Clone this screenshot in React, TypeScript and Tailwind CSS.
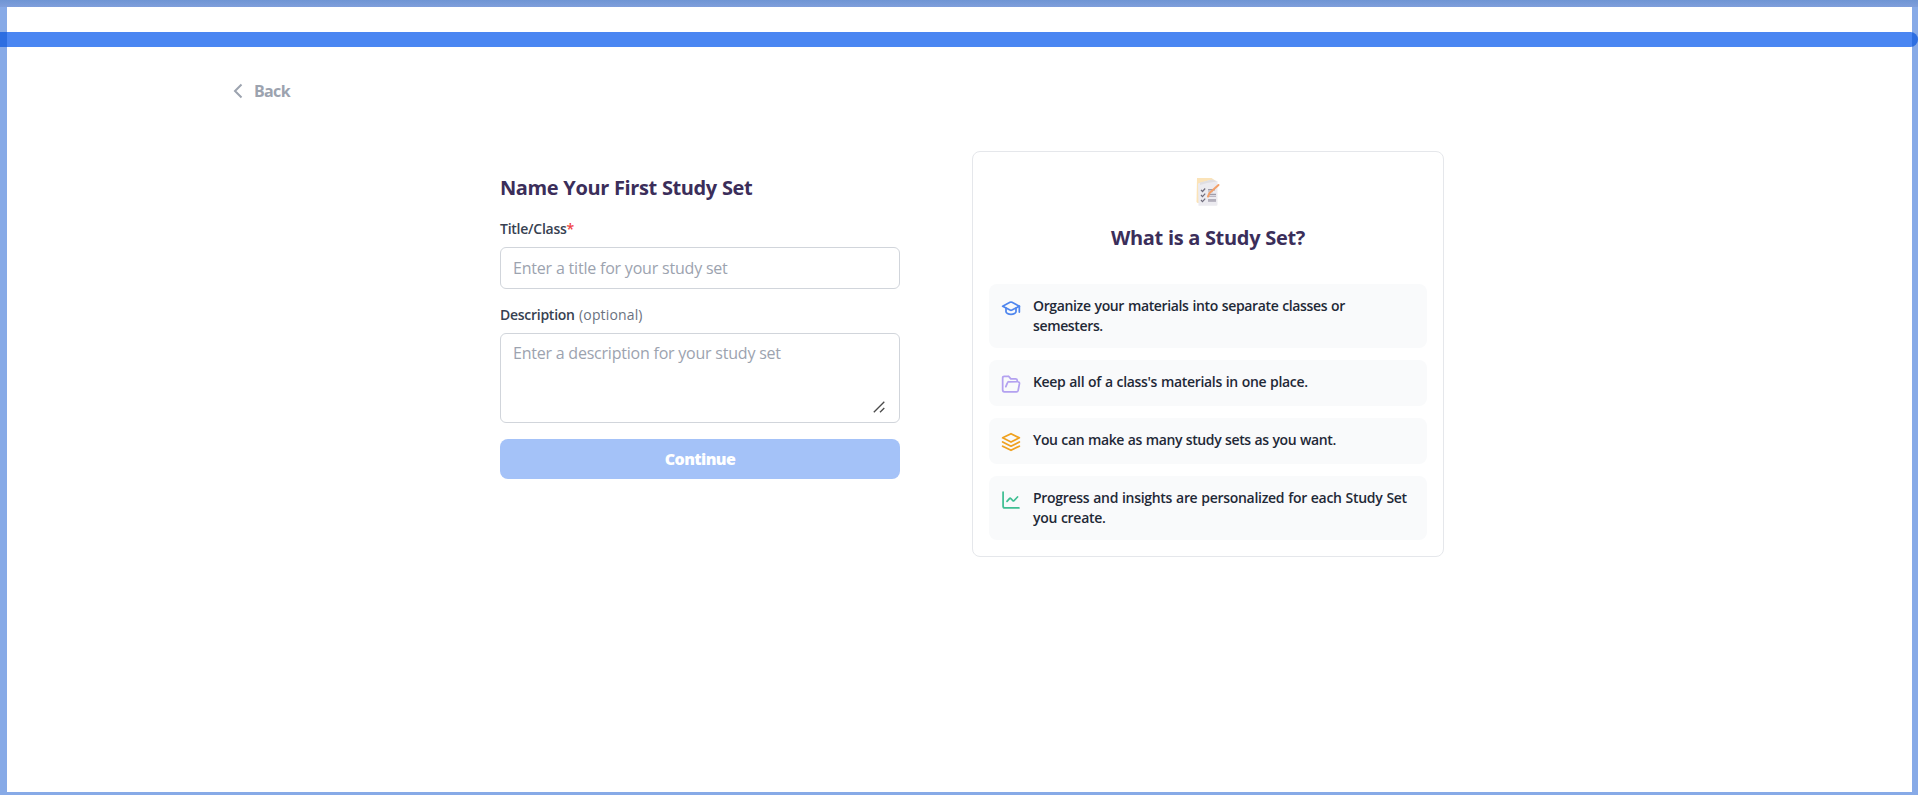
import type { ReactNode } from "react";

const stroke = {
  viewBox: "0 0 24 24",
  fill: "none",
  stroke: "currentColor",
  strokeWidth: 2.1,
  strokeLinecap: "round" as const,
  strokeLinejoin: "round" as const,
};

function CapIcon() {
  return (
    <svg {...stroke} className="size-5 text-[#4f86ee]">
      <path d="M2 9.8 10.8 5.2a2.6 2.6 0 0 1 2.4 0L22 9.8l-8.8 4.6a2.6 2.6 0 0 1-2.4 0L2 9.8Z" />
      <path d="M6 12.2v4.3c0 1.4 2.7 3.2 6 3.2s6-1.8 6-3.2v-4.3" />
      <path d="M22 9.8v7" />
    </svg>
  );
}

function FolderIcon() {
  return (
    <svg {...stroke} className="size-5 text-[#b3a1f0]">
      <path d="M19.5 9V7.8a2 2 0 0 0-2-2h-5.7L9.5 3.2A1.6 1.6 0 0 0 8.3 2.7H3.8A1.8 1.8 0 0 0 2 4.5V19.3a2 2 0 0 0 2 2h14.6a2 2 0 0 0 1.95-1.5l1.6-8.2A2 2 0 0 0 20.2 9.3H9.6a2 2 0 0 0-1.9 1.3L5.8 15.2" />
    </svg>
  );
}

function LayersIcon() {
  return (
    <svg {...stroke} className="size-5 text-[#efa11f]">
      <path d="M2 7 12 2l10 5-10 5L2 7Z" />
      <path d="m2 12 10 5 10-5" />
      <path d="m2 17 10 5 10-5" />
    </svg>
  );
}

function ChartIcon() {
  return (
    <svg {...stroke} className="size-5 text-[#3fbf93]">
      <path d="M2.5 2.5V19.5a2 2 0 0 0 2 2H21.5" />
      <path d="m7.2 13.6 3.2-3.6a.8.8 0 0 1 1.2 0l2.7 2.9a.8.8 0 0 0 1.2 0l4.3-4.5" />
    </svg>
  );
}

function ChecklistArt() {
  return (
    <svg viewBox="0 0 24 28" className="h-7 w-6">
      <path d="M1 0h14.5l4.5 3v22H1.800A1.5 1.5 0 0 1 .5 23.5Z" fill="#fbe3b8" />
      <path d="m2 5.5 12-3.5 7.5 1v23.5a1.2 1.2 0 0 1-1.2 1.300H2.500Z" fill="#ecebf0" />
      <path d="m4 4.5 12-3 5 2-10 1.500-7 2Z" fill="#dfdee2" />
      <path d="M12 11.8h7M12 16.500h8M12 22h8" stroke="#a09daa" strokeWidth="1.500" />
      <path d="M12 13.800h5M12 18.500h8M12 23.500h8" stroke="#bbb8c4" strokeWidth="1" />
      <path d="m5 11.800 1.500 1.700 2.700-3M5 17l1.500 1.700 2.700-3M5 22l1.500 1.700 2.700-3" fill="none" stroke="#6f6c7c" strokeWidth="1.200" />
      <path d="m22.500 7-9 8-1.500 3.500" fill="none" stroke="#f3a069" strokeWidth="2" strokeLinecap="round" />
    </svg>
  );
}

const benefits: { icon: ReactNode; text: string; tracking: string }[] = [
  {
    icon: <CapIcon />,
    text: "Organize your materials into separate classes or semesters.",
    tracking: "tracking-[-0.36px] [word-spacing:0.6px]",
  },
  {
    icon: <FolderIcon />,
    text: "Keep all of a class's materials in one place.",
    tracking: "tracking-[-0.32px] [word-spacing:0.5px]",
  },
  {
    icon: <LayersIcon />,
    text: "You can make as many study sets as you want.",
    tracking: "tracking-[-0.38px] [word-spacing:0.5px]",
  },
  {
    icon: <ChartIcon />,
    text: "Progress and insights are personalized for each Study Set you create.",
    tracking: "tracking-[-0.3px] [word-spacing:0.6px]",
  },
];

export default function App() {
  return (
    <div className='relative h-[795px] w-full overflow-hidden bg-white pt-8 font-["Open_Sans","Noto_Sans",sans-serif]'>
      <div className="h-[15px] w-full rounded-r-full bg-[#4a86f2]" />

      <button className="ml-[228px] mt-8 flex h-6 items-center text-[#9ca3af]">
        <svg viewBox="0 0 20 20" fill="none" stroke="currentColor" strokeWidth="2" className="size-5">
          <path d="m13.500 3.500-6.500 6.500 6.500 6.500" />
        </svg>
        <span className="ml-1.5 text-base/6 font-bold tracking-[-0.65px]">Back</span>
      </button>

      <main className="mt-12 flex items-start pl-[500px]">
        <form className="flex w-[400px] flex-col pt-[23px]">
          <h1 className="text-xl/7 font-bold tracking-[-0.39px] text-[#3b2e5a] [word-spacing:0.3px]">
            Name Your First Study Set
          </h1>
          <label className="mt-[17px] text-sm/5 font-semibold tracking-[-0.25px] text-[#374151]">
            Title/Class<span className="text-[#ef4444]">*</span>
          </label>
          <input
            placeholder="Enter a title for your study set"
            className="mt-2 h-[42px] rounded-md border border-[#d1d5db] px-3 pb-px text-base/6 tracking-[-0.2px] placeholder:text-[#9ca3af]"
          />
          <label className="mt-[16px] text-sm/5 font-semibold tracking-[-0.27px] text-[#374151]">
            Description <span className="ml-px font-medium tracking-[0.15px] text-[#6b7280]">(optional)</span>
          </label>
          <div className="mt-2 flex h-[90px] rounded-md border border-[#d1d5db] pb-[9px] pl-3 pr-[14px] pt-[7px]">
            <textarea
              placeholder="Enter a description for your study set"
              className="flex-1 resize-none text-base/6 tracking-[-0.22px] placeholder:text-[#9ca3af]"
            />
            <svg viewBox="0 0 12 12" fill="none" stroke="#4b4b4b" strokeWidth="1.3" className="size-3 self-end">
              <path d="M.8 11.300 11.300.8M7 11.300l4.300-4.300" />
            </svg>
          </div>
          <button
            type="button"
            className="mt-4 h-10 rounded-lg bg-[#a4c2f8] pb-px text-base/6 font-extrabold tracking-[-0.6px] text-white"
          >
            Continue
          </button>
        </form>

        <aside className="h-[406px] ml-[72px] w-[472px] rounded-lg border border-[#e5e7eb] px-4 pt-[26px]">
          <div className="flex flex-col items-center">
            <ChecklistArt />
            <h2 className="mt-[18px] text-xl/7 font-bold tracking-[-0.3px] text-[#3b2e5a]">What is a Study Set?</h2>
          </div>
          <ul className="mt-[32px] flex flex-col gap-3">
            {benefits.map((b) => (
              <li key={b.text} className="flex gap-3 rounded-lg bg-[#f9fafb] p-3">
                <span className="mt-0.5 h-5 shrink-0">{b.icon}</span>
                <span className={`text-sm/5 font-semibold text-[#1f2937] ${b.tracking}`}>{b.text}</span>
              </li>
            ))}
          </ul>
        </aside>
      </main>

      <div className="pointer-events-none absolute inset-0 flex flex-col">
        <div className="h-[7px] bg-linear-to-b from-[#6f95d4] to-[#7f9edb]" />
        <div className="flex-1 border-b-[3px] border-l-[7px] border-r-[6px] border-[#0f56cf]/50" />
      </div>
    </div>
  );
}
